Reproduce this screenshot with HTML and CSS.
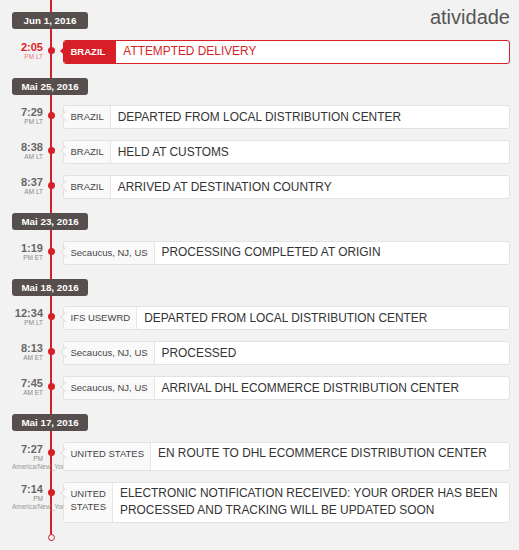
FILE: index.html
```html
<!DOCTYPE html>
<html lang="pt">
<head>
<meta charset="utf-8">
<title>atividade</title>
<link rel="stylesheet" href="styles.css">
</head>
<body>
<div class="timeline">
  <section class="group first">
    <div class="head">
      <div class="date">Jun 1, 2016</div>
      <h1 class="title">atividade</h1>
    </div>
    <div class="event alert">
      <div class="time"><b>2:05</b><span>PM LT</span></div>
      <i class="dot"></i>
      <div class="card"><div class="loc">BRAZIL</div><div class="desc">ATTEMPTED DELIVERY</div></div>
    </div>
  </section>

  <section class="group">
    <div class="date">Mai 25, 2016</div>
    <div class="event">
      <div class="time"><b>7:29</b><span>PM LT</span></div>
      <i class="dot"></i>
      <div class="card"><div class="loc">BRAZIL</div><div class="desc">DEPARTED FROM LOCAL DISTRIBUTION CENTER</div></div>
    </div>
    <div class="event">
      <div class="time"><b>8:38</b><span>AM LT</span></div>
      <i class="dot"></i>
      <div class="card"><div class="loc">BRAZIL</div><div class="desc">HELD AT CUSTOMS</div></div>
    </div>
    <div class="event">
      <div class="time"><b>8:37</b><span>AM LT</span></div>
      <i class="dot"></i>
      <div class="card"><div class="loc">BRAZIL</div><div class="desc">ARRIVED AT DESTINATION COUNTRY</div></div>
    </div>
  </section>

  <section class="group">
    <div class="date">Mai 23, 2016</div>
    <div class="event">
      <div class="time"><b>1:19</b><span>PM ET</span></div>
      <i class="dot"></i>
      <div class="card"><div class="loc">Secaucus, NJ, US</div><div class="desc">PROCESSING COMPLETED AT ORIGIN</div></div>
    </div>
  </section>

  <section class="group">
    <div class="date">Mai 18, 2016</div>
    <div class="event">
      <div class="time"><b>12:34</b><span>PM LT</span></div>
      <i class="dot"></i>
      <div class="card"><div class="loc">IFS USEWRD</div><div class="desc">DEPARTED FROM LOCAL DISTRIBUTION CENTER</div></div>
    </div>
    <div class="event">
      <div class="time"><b>8:13</b><span>AM ET</span></div>
      <i class="dot"></i>
      <div class="card"><div class="loc">Secaucus, NJ, US</div><div class="desc">PROCESSED</div></div>
    </div>
    <div class="event">
      <div class="time"><b>7:45</b><span>AM ET</span></div>
      <i class="dot"></i>
      <div class="card"><div class="loc">Secaucus, NJ, US</div><div class="desc">ARRIVAL DHL ECOMMERCE DISTRIBUTION CENTER</div></div>
    </div>
  </section>

  <section class="group">
    <div class="date">Mai 17, 2016</div>
    <div class="event">
      <div class="time"><b>7:27</b><span>PM</span><span class="tz">America/New_York</span></div>
      <i class="dot"></i>
      <div class="card"><div class="loc">UNITED STATES</div><div class="desc">EN ROUTE TO DHL ECOMMERCE DISTRIBUTION CENTER</div></div>
    </div>
    <div class="event">
      <div class="time"><b>7:14</b><span>PM</span><span class="tz">America/New_York</span></div>
      <i class="dot"></i>
      <div class="card"><div class="loc">UNITED STATES</div><div class="desc">ELECTRONIC NOTIFICATION RECEIVED: YOUR ORDER HAS BEEN PROCESSED AND TRACKING WILL BE UPDATED SOON</div></div>
    </div>
  </section>

  <div class="end"></div>
</div>
</body>
</html>
```

FILE: styles.css
```css
* { box-sizing: border-box; }

html, body {
  margin: 0;
  background: #f2f2f2;
  font-family: "Liberation Sans", Arial, sans-serif;
}

.timeline {
  display: flex;
  flex-direction: column;
  padding: 12px 9px 0 12px;
  background: linear-gradient(#d71f27, #d71f27) no-repeat 50px 0 / 2px 100%;
}

.group {
  display: flex;
  flex-direction: column;
  margin-top: 3px;
}

.group.first {
  margin-top: 0;
}

.head {
  display: flex;
  justify-content: space-between;
  align-items: flex-start;
  margin-bottom: 10.5px;
}

.title {
  margin: -6px 0 0;
  font-size: 20px;
  line-height: 23px;
  font-weight: normal;
  color: #555;
}

.date {
  width: 76px;
  height: 17px;
  line-height: 17px;
  background: #574f4d;
  color: #fff;
  border-radius: 3px;
  font-size: 9.8px;
  font-weight: bold;
  text-align: center;
}

.group > .date {
  margin-bottom: 10.5px;
}

.event {
  display: flex;
  align-items: stretch;
  margin-bottom: 11px;
}

.time {
  flex: none;
  width: 31px;
  padding-top: 2px;
  text-align: right;
  color: #888;
}

.time b {
  display: block;
  font-size: 11px;
  line-height: 11px;
  color: #666;
}

.time span {
  display: block;
  font-size: 6.5px;
  line-height: 7px;
  white-space: nowrap;
}

.time .tz {
  line-height: 9px;
  color: #999;
}

.dot {
  flex: none;
  width: 7px;
  height: 7px;
  margin: 7px 8.5px 0 4.5px;
  border-radius: 50%;
  background: #d71f27;
}

.card {
  position: relative;
  flex: 1;
  min-width: 0;
  display: flex;
  align-items: stretch;
  background: #fff;
  border: 1px solid #e2e2e2;
  border-radius: 3px;
}

.card::before {
  content: "";
  position: absolute;
  left: -2.5px;
  top: 6px;
  width: 7px;
  height: 7px;
  background: #f9f9f9;
  border-left: 1px solid #e0e0e0;
  border-bottom: 1px solid #e0e0e0;
  transform: rotate(45deg);
}

.loc {
  flex: 0 3 auto;
  padding: 4px 6px 4px 6.5px;
  background: #f9f9f9;
  border-right: 1px solid #e6e6e6;
  border-radius: 2px 0 0 2px;
  font-size: 9.5px;
  line-height: 13px;
  color: #444;
}

.desc {
  flex: 1 1 auto;
  padding: 2.5px 4px 2.5px 7px;
  font-size: 11.9px;
  line-height: 17px;
  color: #333;
}

.alert .time b { color: #d71f27; }
.alert .time span { color: #e87a7f; }

.alert .card { border-color: #d71f27; }
.alert .card::before {
  background: #d71f27;
  border-color: #d71f27;
}
.alert .loc {
  background: #d71f27;
  border-right-color: #d71f27;
  color: #fff;
  font-weight: bold;
  padding-right: 10px;
}
.alert .desc { color: #d71f27; }

.end {
  flex: none;
  width: 7px;
  height: 7px;
  margin-left: 35.5px;
  border: 1.5px solid #d71f27;
  border-radius: 50%;
  background: #f2f2f2;
}
```
